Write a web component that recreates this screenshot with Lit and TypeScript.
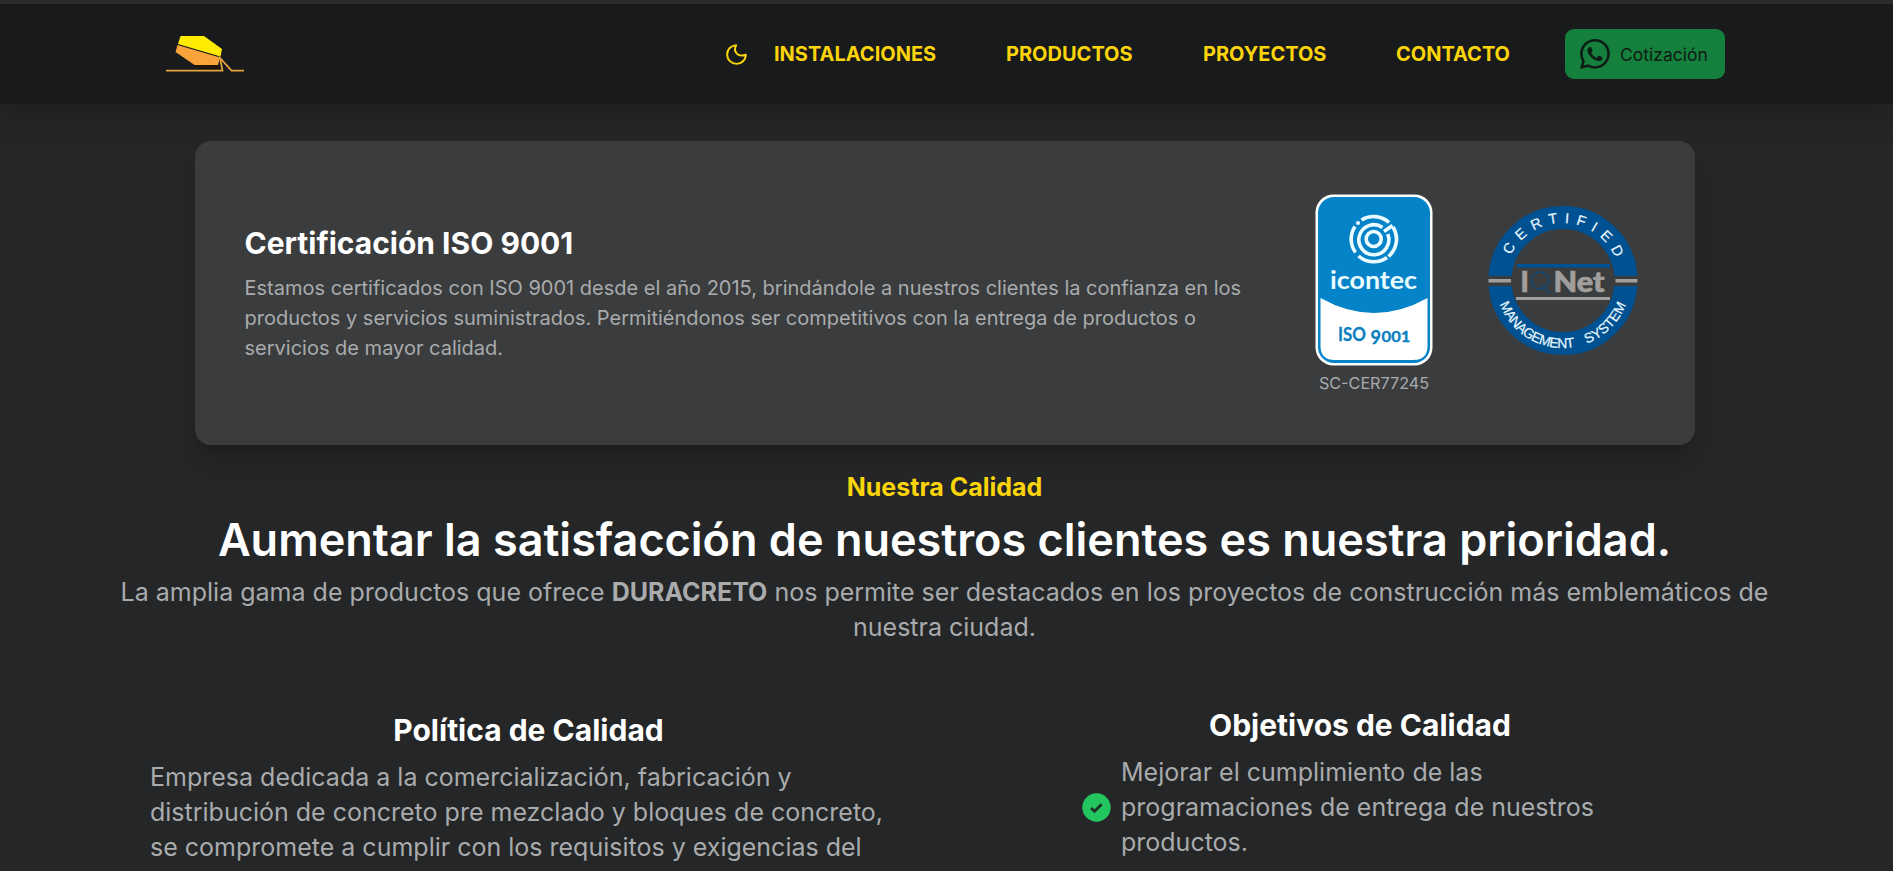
import { LitElement, html, css, svg } from "lit";
import { customElement } from "lit/decorators.js";

const NAV = [
  { label: "INSTALACIONES", cls: "n1" },
  { label: "PRODUCTOS", cls: "n2" },
  { label: "PROYECTOS", cls: "n3" },
  { label: "CONTACTO", cls: "n4" },
];

const Q_DOTS = Array.from({ length: 16 }, (_, i) => {
  const a = (i / 16) * Math.PI * 2;
  return { x: 52 + Math.cos(a) * 8.5, y: 74.5 + Math.sin(a) * 8.5 };
});

@customElement("brand-logo")
class BrandLogo extends LitElement {
  static styles = css`:host { display: block; width: 80px; height: 38px; } svg { display: block; }`;
  render() {
    return html`<svg width="80" height="38" viewBox="165 35 80 38">
      <path d="M192.500 65 L218 65 L220.500 70 L200 69Z" fill="#21140d" />
      <path d="M180.500 36 L204 36 L222 49 L220.500 56.500 L178 44Z" fill="#ffec00" />
      <path d="M177.500 45 L220 57.500 L218 65 L194.500 65 L175.500 52Z" fill="#f9a33a" />
      <path d="M166 70.600 H222.500 L220 58 L231.500 70.600 H244" fill="none" stroke="#e3a23c" stroke-width="1.800" />
    </svg>`;
  }
}

@customElement("icontec-seal")
class IcontecSeal extends LitElement {
  static styles = css`:host { display: block; } svg { display: block; }`;
  render() {
    return html`<svg width="118" height="172" viewBox="0 0 118 172">
      <rect x="0.500" y="0.500" width="117" height="171" rx="18" fill="#fff" />
      <rect x="3" y="3" width="112" height="166" rx="16" fill="#0583c9" />
      <path d="M5.500 104 Q59 134 112.500 104 V152 Q112.500 166 98 166 H20 Q5.500 166 5.500 152Z" fill="#fff" />
      <g fill="none" stroke="#eafcff" stroke-width="3.600">
        <circle cx="58.700" cy="45" r="7.500" />
        <path d="M67.500 33.500 A15 15 0 1 0 72.700 40" />
        <path d="M46.500 26 A22.800 22.800 0 0 1 74 28.500" />
        <path d="M78 33 A22.800 22.800 0 0 1 73.500 62.500" />
        <path d="M72 63.500 A22.800 22.800 0 0 1 43.500 62" />
        <path d="M40.500 58.500 A22.800 22.800 0 0 1 40 32.500" />
        <path d="M69 37.500 L77.500 31.500" />
      </g>
      <circle cx="43" cy="29" r="2" fill="#eafcff" />
      <text x="58.500" y="94.500" text-anchor="middle" font-family="Lato" font-weight="700" font-size="24" fill="#eafcff" textLength="87" lengthAdjust="spacingAndGlyphs">icontec</text>
      <g font-family="Lato" font-weight="700" fill="#0b7ec0" stroke="#0b7ec0" stroke-width="0.300">
        <text x="23" y="147" font-size="18.500" textLength="28" lengthAdjust="spacingAndGlyphs">ISO</text>
        <text x="55.500" y="150" font-size="18" textLength="10.500" lengthAdjust="spacingAndGlyphs">9</text>
        <text x="66.500" y="147.500" font-size="15.500" textLength="29" lengthAdjust="spacingAndGlyphs">001</text>
      </g>
    </svg>`;
  }
}

@customElement("iqnet-seal")
class IqnetSeal extends LitElement {
  static styles = css`:host { display: block; } svg { display: block; }`;
  render() {
    return html`<svg width="150" height="150" viewBox="0 0 150 150">
      <defs>
        <path id="top" d="M17 74.500 A57.500 57.500 0 0 1 132 74.500" />
        <path id="bot" d="M7.500 74.500 A67.500 67.500 0 0 0 142.500 74.500" />
      </defs>
      <circle cx="75" cy="74.500" r="63" fill="none" stroke="#005192" stroke-width="23" />
      <rect x="0" y="70" width="26" height="10" fill="#3a3c3d" />
      <rect x="124" y="70" width="26" height="10" fill="#3a3c3d" />
      <rect x="0.500" y="73" width="22.500" height="3.500" fill="#a19e9b" />
      <rect x="127.500" y="73" width="22" height="3.500" fill="#a19e9b" />
      <rect x="29" y="58" width="93" height="3.500" fill="#005192" />
      <rect x="28" y="91" width="94" height="3" fill="#a19e9b" />
      <g font-family="Lato" font-weight="900" font-size="27.500" fill="#a19e9b" stroke="#a19e9b" stroke-width="0.700">
        <text x="32.500" y="85.500">I</text>
        <text x="65.500" y="85.500" textLength="51" lengthAdjust="spacingAndGlyphs">Net</text>
      </g>
      ${Q_DOTS.map((d) => svg`<circle cx=${d.x} cy=${d.y} r="1.200" fill="#124d7d" />`)}
      <path d="M53 79 L62 87" stroke="#124d7d" stroke-width="2.200" stroke-dasharray="2 1.200" />
      <g fill="#e8f8ff" stroke="#e8f8ff" stroke-width="0.200" font-family="Liberation Sans">
        <text font-size="14.500"><textPath href="#top" startOffset="26" textLength="131">CERTIFIED</textPath></text>
        <text font-size="13.800"><textPath href="#bot" startOffset="24" textLength="94">MANAGEMENT</textPath></text>
        <text font-size="13.800"><textPath href="#bot" startOffset="130" textLength="57">SYSTEM</textPath></text>
      </g>
    </svg>`;
  }
}

@customElement("app-root")
class AppRoot extends LitElement {
  static styles = css`
    :host { display: block; width: 1893px; height: 871px; overflow: hidden; background: #242627;
      font-family: Inter, "Open Sans", sans-serif; color: #a9abad; box-sizing: border-box; }
    * { box-sizing: border-box; margin: 0; padding: 0; }
    .strip { height: 4px; background: #2c2e2e; }
    header { height: 100px; background: #181a1b; box-shadow: 0 12px 32px rgba(0,0,0,.2); display: flex; align-items: center; padding-left: 165px; }
    brand-logo { margin-top: -1px; }
    .moon { display: block; margin-left: 479px; width: 25px; height: 25px; }
    nav { display: flex; align-items: center; color: #fcd40a; font-size: 20px; font-weight: 700; line-height: 28px; white-space: nowrap; margin-left: 25px; }
    nav a { width: 232px; }
    nav .n2 { width: 197px; }
    nav .n3 { width: 193px; }
    nav .n4 { width: 169px; }
    .quote { width: 160px; height: 50px; border-radius: 9px; background: #15803d; color: #0d1c14; display: flex; align-items: center; border: 0; padding-left: 15px; font: 400 17.500px/24px Inter, sans-serif; }
    .quote svg { margin-right: 10px; display: block; }
    .quote span { padding-top: 1px; }
    .card { width: 1500px; height: 304px; margin: 37px 0 0 195px; background: #3a3c3d; border-radius: 16px; box-shadow: 0 20px 25px -5px rgba(0,0,0,.16), 0 8px 10px -6px rgba(0,0,0,.12); display: flex; padding: 0 0 0 49.500px; }
    .copy { width: 1070.500px; padding-top: 82px; white-space: nowrap; }
    h2, h3 { color: #fff; font-weight: 700; font-size: 30px; line-height: 40px; white-space: nowrap; }
    .copy p { font-size: 20px; line-height: 30px; margin-top: 10px; }
    .seal { width: 118px; margin-top: 53px; display: flex; flex-direction: column; align-items: center; }
    .seal small { font-size: 16.200px; line-height: 20px; margin-top: 7px; white-space: nowrap; }
    iqnet-seal { margin: 65px 0 0 55px; }
    .intro { width: 1889px; text-align: center; white-space: nowrap; padding-top: 27px; }
    .kicker { color: #fcd40a; font-weight: 700; font-size: 25px; line-height: 30px; }
    h1 { color: #fff; font-weight: 600; font-size: 45px; line-height: 50px; margin-top: 13px; }
    .lead { font-size: 25px; line-height: 35px; margin-top: 10px; }
    .cols { display: flex; }
    .policy { width: 757px; margin-left: 150px; padding-top: 65px; white-space: nowrap; }
    .policy h3 { text-align: center; }
    .goals { width: 700px; margin-left: 103px; padding-top: 60px; white-space: nowrap; }
    .goals h3 { text-align: center; }
    .body { font-size: 25px; line-height: 35px; margin-top: 10px; }
    .item { display: flex; align-items: center; gap: 10px; padding-left: 72px; }
  `;
  render() {
    return html`
      <div class="strip"></div>
      <header>
        <brand-logo></brand-logo>
        <svg class="moon" viewBox="0 0 24 24" fill="none" stroke="#fcd40a" stroke-width="1.900" stroke-linecap="round" stroke-linejoin="round"><path d="M21 12.200A9 9 0 1 1 11.700 3 C8.400 8.700 13 15.200 21 12.200z" /></svg>
        <nav>${NAV.map((n) => html`<a class=${n.cls}>${n.label}</a>`)}</nav>
        <button class="quote">
          <svg width="30" height="30" viewBox="0 0 16 16" fill="currentColor"><path d="M13.601 2.326A7.850 7.850 0 0 0 7.994 0C3.627 0 .068 3.558.064 7.926c0 1.399.366 2.760 1.057 3.965L0 16l4.204-1.102a7.900 7.900 0 0 0 3.790.965h.004c4.368 0 7.926-3.558 7.930-7.930A7.900 7.900 0 0 0 13.600 2.326zM7.994 14.521a6.600 6.600 0 0 1-3.356-.920l-.240-.144-2.494.654.666-2.433-.156-.251a6.560 6.560 0 0 1-1.007-3.505c0-3.626 2.957-6.584 6.591-6.584a6.560 6.560 0 0 1 4.660 1.931 6.560 6.560 0 0 1 1.928 4.660c-.004 3.639-2.961 6.592-6.592 6.592m3.615-4.934c-.197-.099-1.170-.578-1.353-.646-.182-.065-.315-.099-.445.099-.133.197-.513.646-.627.775-.114.133-.232.148-.430.050-.197-.100-.836-.308-1.592-.985-.590-.525-.985-1.175-1.103-1.372-.114-.198-.011-.304.088-.403.087-.088.197-.232.296-.346.100-.114.133-.198.198-.330.065-.134.034-.248-.015-.347-.050-.099-.445-1.076-.612-1.470-.160-.389-.323-.335-.445-.340-.114-.007-.247-.007-.380-.007a.730.730 0 0 0-.529.247c-.182.198-.691.677-.691 1.654s.710 1.916.810 2.049c.098.133 1.394 2.132 3.383 2.992.470.205.840.326 1.129.418.475.152.904.129 1.246.080.380-.058 1.171-.480 1.338-.943.164-.464.164-.860.114-.943-.049-.084-.182-.133-.380-.232" /></svg>
          <span>Cotización</span>
        </button>
      </header>
      <section class="card">
        <div class="copy">
          <h2>Certificación ISO 9001</h2>
          <p>Estamos certificados con ISO 9001 desde el año 2015, brindándole a nuestros clientes la confianza en los<br />productos y servicios suministrados. Permitiéndonos ser competitivos con la entrega de productos o<br />servicios de mayor calidad.</p>
        </div>
        <div class="seal"><icontec-seal></icontec-seal><small>SC-CER77245</small></div>
        <iqnet-seal></iqnet-seal>
      </section>
      <section class="intro">
        <div class="kicker">Nuestra Calidad</div>
        <h1>Aumentar la satisfacción de nuestros clientes es nuestra prioridad.</h1>
        <p class="lead">La amplia gama de productos que ofrece <b>DURACRETO</b> nos permite ser destacados en los proyectos de construcción más emblemáticos de<br />nuestra ciudad.</p>
      </section>
      <section class="cols">
        <div class="policy">
          <h3>Política de Calidad</h3>
          <p class="body">Empresa dedicada a la comercialización, fabricación y<br />distribución de concreto pre mezclado y bloques de concreto,<br />se compromete a cumplir con los requisitos y exigencias del</p>
        </div>
        <div class="goals">
          <h3>Objetivos de Calidad</h3>
          <div class="item body">
            <svg width="29" height="29" viewBox="0 0 29 29"><circle cx="14.500" cy="14.500" r="14.200" fill="#22c55e" /><path d="M9 15 L12.500 18.300 L19.700 11.300" fill="none" stroke="#1b3024" stroke-width="2.700" /></svg>
            <p>Mejorar el cumplimiento de las<br />programaciones de entrega de nuestros<br />productos.</p>
          </div>
        </div>
      </section>
    `;
  }
}
